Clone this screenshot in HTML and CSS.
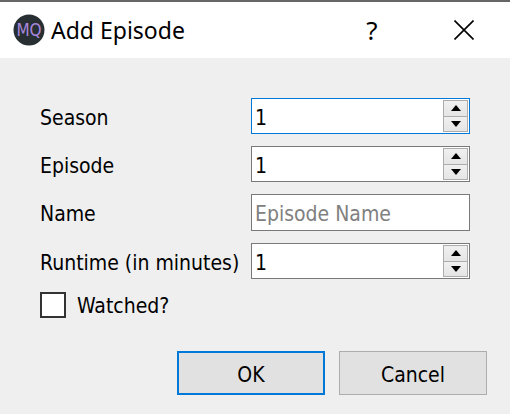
FILE: index.html
```html
<!DOCTYPE html>
<html lang="en">
<head>
<meta charset="utf-8">
<meta name="viewport" content="width=device-width, initial-scale=1">
<title>Add Episode</title>
<link rel="stylesheet" href="styles.css">
</head>
<body>
<header class="titlebar">
  <svg class="logo" viewBox="0 0 32 32" role="img" aria-label="MQ">
    <circle cx="16" cy="16" r="15.5" fill="#272f33"/>
    <text class="logo-text" x="16" y="22" text-anchor="middle">MQ</text>
  </svg>
  <h1 class="title">Add Episode</h1>
  <button class="title-button" type="button" aria-label="Help">?</button>
  <button class="title-button" type="button" aria-label="Close">
    <svg class="close-icon" viewBox="0 0 20 20" aria-hidden="true"><path d="M.5.5l19 19M19.5.5l-19 19"/></svg>
  </button>
</header>
<form class="dialog">
  <div class="fields">
    <label for="season">Season</label>
    <div class="spinbox active">
      <input id="season" type="number" value="1" min="1">
      <div class="steps">
        <button type="button" aria-label="Increase season"><svg viewBox="0 0 10 6"><path d="M5 0l5 6H0z"/></svg></button>
        <button type="button" aria-label="Decrease season"><svg viewBox="0 0 10 6"><path d="M0 0h10L5 6z"/></svg></button>
      </div>
    </div>
    <label for="episode">Episode</label>
    <div class="spinbox">
      <input id="episode" type="number" value="1" min="1">
      <div class="steps">
        <button type="button" aria-label="Increase episode"><svg viewBox="0 0 10 6"><path d="M5 0l5 6H0z"/></svg></button>
        <button type="button" aria-label="Decrease episode"><svg viewBox="0 0 10 6"><path d="M0 0h10L5 6z"/></svg></button>
      </div>
    </div>
    <label for="name">Name</label>
    <input class="textbox" id="name" type="text" placeholder="Episode Name">
    <label for="runtime">Runtime (in minutes)</label>
    <div class="spinbox">
      <input id="runtime" type="number" value="1" min="1">
      <div class="steps">
        <button type="button" aria-label="Increase runtime"><svg viewBox="0 0 10 6"><path d="M5 0l5 6H0z"/></svg></button>
        <button type="button" aria-label="Decrease runtime"><svg viewBox="0 0 10 6"><path d="M0 0h10L5 6z"/></svg></button>
      </div>
    </div>
    <div class="check-row">
      <input id="watched" type="checkbox">
      <label for="watched">Watched?</label>
    </div>
  </div>
  <div class="actions">
    <button class="action primary" type="submit">OK</button>
    <button class="action" type="button">Cancel</button>
  </div>
</form>
</body>
</html>
```
FILE: styles.css
```css
* { box-sizing: border-box; }

body {
  margin: 0;
  min-height: 100vh;
  background: #efefef;
  color: #000;
  font: 21px/24px "DejaVu Sans Condensed", "Noto Sans", sans-serif;
}

button, input { font: inherit; color: inherit; }

.titlebar {
  display: flex;
  align-items: center;
  height: 58px;
  padding-left: 13px;
  border-top: 2px solid #666;
  background: #fff;
}

.logo { width: 32px; height: 32px; }
.logo-text {
  font: 17px "Liberation Sans Narrow", "DejaVu Sans Condensed", sans-serif;
  fill: #a987dc;
}

.title {
  flex: 1;
  margin: 0 0 0 6px;
  font: 23px/32px "Noto Sans", sans-serif;
}

.title-button {
  display: flex;
  align-items: center;
  justify-content: center;
  width: 92px;
  height: 56px;
  padding: 0;
  border: 0;
  background: none;
  font: 26px/32px "Noto Sans", sans-serif;
}

.close-icon { width: 20px; height: 20px; fill: none; stroke: #000; stroke-width: 1.6; }

.dialog { padding: 40px 23px 19px 40px; }

.fields {
  display: grid;
  grid-template-columns: 199px minmax(0, 1fr);
  gap: 12px;
  align-items: center;
  margin-right: 17px;
}

.fields label {
  padding-top: 3px;
  white-space: nowrap;
}

.spinbox {
  display: flex;
  height: 36px;
  padding: 1px;
  border: 1px solid #7a7a7a;
  background: #fff;
}
.spinbox.active { border-color: #0078d7; }

.spinbox input {
  flex: 1;
  min-width: 0;
  padding: 3px 2px 0;
  border: 0;
  outline: 0;
  background: none;
  appearance: textfield;
}
.spinbox input::-webkit-inner-spin-button { appearance: none; margin: 0; }

.steps {
  display: grid;
  grid-template-rows: 1fr 1fr;
  gap: 1px;
  width: 25px;
  padding: 1px;
  background: #acacac;
}
.steps button {
  display: flex;
  align-items: center;
  justify-content: center;
  min-height: 0;
  padding: 0;
  border: 0;
  background: linear-gradient(#f0f0f0, #e5e5e5);
}
.steps svg { width: 10px; height: 6px; }

.textbox {
  width: 100%;
  min-width: 0;
  height: 37px;
  padding: 3px 3px 0;
  border: 1px solid #7a7a7a;
  outline: 0;
  background: #fff;
}
.textbox::placeholder { color: #808080; opacity: 1; }

.check-row {
  grid-column: 1 / -1;
  display: flex;
  align-items: center;
  gap: 11px;
}
.check-row input {
  appearance: none;
  width: 26px;
  height: 26px;
  margin: 0;
  border: 2px solid #333;
  background: #fff;
}
.check-row input:checked { background: #333; }

.actions {
  display: flex;
  justify-content: flex-end;
  gap: 14px;
  margin-top: 33px;
}
.action {
  width: 148px;
  height: 44px;
  padding: 3px 0 0;
  border: 1px solid #adadad;
  background: #e1e1e1;
}
.action.primary { border: 2px solid #0078d7; }
```
